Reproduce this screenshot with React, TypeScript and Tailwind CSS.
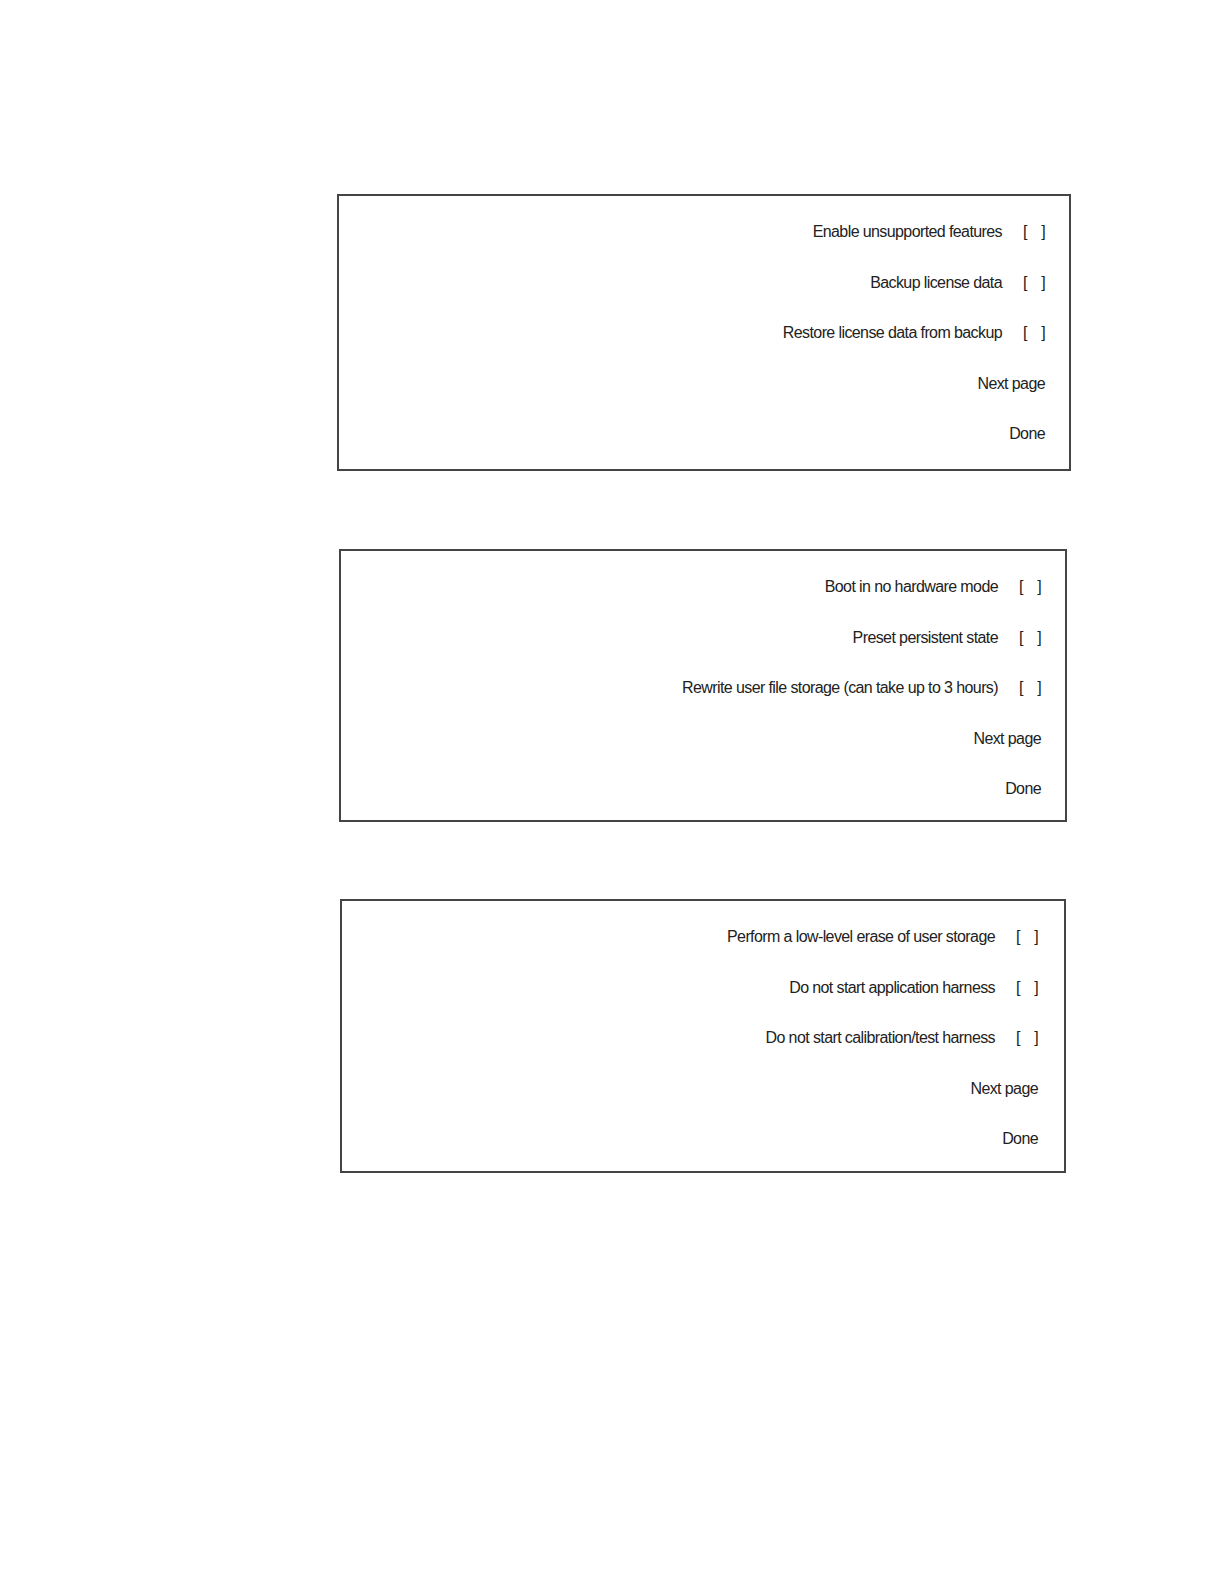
import React from 'react';

type Panel = {
  options: string[];
  className: string;
};

const panels: Panel[] = [
  {
    options: ['Enable unsupported features', 'Backup license data', 'Restore license data from backup'],
    className: 'ml-[337px] w-[734px] h-[277px] pr-[24px]',
  },
  {
    options: ['Boot in no hardware mode', 'Preset persistent state', 'Rewrite user file storage (can take up to 3 hours)'],
    className: 'ml-[339px] w-[728px] h-[273px] mt-[78px] pr-[24px]',
  },
  {
    options: ['Perform a low-level erase of user storage', 'Do not start application harness', 'Do not start calibration/test harness'],
    className: 'ml-[340px] w-[726px] h-[274px] mt-[77px] pr-[26px]',
  },
];

const OptionRow = ({ label }: { label: string }) => (
  <div className="h-[50.5px] flex items-center justify-end">
    <span>{label}</span>
    <span className="ml-[21px] w-[22px] flex justify-between">
      <span>[</span>
      <span>]</span>
    </span>
  </div>
);

const LinkRow = ({ label }: { label: string }) => (
  <div className="h-[50.5px] flex items-center justify-end">
    <span>{label}</span>
  </div>
);

const App = () => {
  return (
    <div className="min-h-screen bg-white pt-[194px] text-[#222] text-[16px] tracking-[-0.6px] font-['Liberation_Sans',Arial,sans-serif]">
      {panels.map((panel, i) => (
        <div key={i} className={`${panel.className} border-2 border-[#444] pt-[11px] flex flex-col`}>
          {panel.options.map((opt) => (
            <OptionRow key={opt} label={opt} />
          ))}
          <LinkRow label="Next page" />
          <LinkRow label="Done" />
        </div>
      ))}
    </div>
  );
};

export default App;
